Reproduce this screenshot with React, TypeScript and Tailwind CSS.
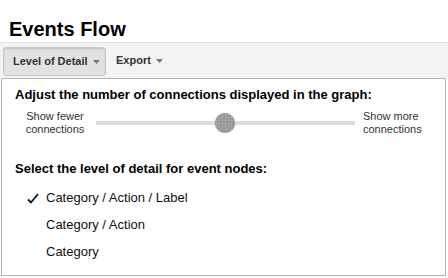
import React from "react";

function Caret() {
  return (
    <svg width="7" height="4" viewBox="0 0 7 4" className="ml-[5px] mt-[1px]">
      <path d="M0 0h7L3.5 4z" fill="#777" />
    </svg>
  );
}

function Check() {
  return (
    <svg width="12" height="11" viewBox="0 0 12 11" className="shrink-0">
      <path d="M1 6.5 4 9.5 11 1" fill="none" stroke="#111" strokeWidth="1.8" />
    </svg>
  );
}

const levels = ["Category / Action / Label", "Category / Action", "Category"];

export default function App() {
  return (
    <div
      className="w-[448px] h-[278px] bg-white overflow-hidden text-[#222]"
      style={{ fontFamily: '"Liberation Sans", Arial, sans-serif' }}
    >
      <h1 className="h-[42px] pl-[9px] pt-[17px] text-[20px] leading-[24px] font-bold text-black">
        Events Flow
      </h1>
      <div className="h-[36px] border-t border-[#e2e2e2] bg-[#f3f3f3] flex items-center pl-[3px] gap-[7px]">
        <button className="h-[29px] w-[103px] mt-[1px] flex items-center pl-[9px] rounded-[3px] border border-[#c8c8c8] bg-[#e2e2e2] shadow-[inset_0_1px_2px_rgba(0,0,0,0.15)] text-[11px] font-bold text-[#333]">
          Level of Detail
          <Caret />
        </button>
        <button className="h-[29px] flex items-center px-[3px] text-[11px] font-bold text-[#333]">
          Export
          <Caret />
        </button>
      </div>
      <div className="ml-[1px] w-[445px] h-[198px] border border-[#b5b5b5] bg-white">
        <div className="pl-[13px] pt-[8px] text-[13px] leading-[16px] font-bold text-black">
          Adjust the number of connections displayed in the graph:
        </div>
        <div className="flex items-center mt-[6px] h-[28px]">
          <div className="w-[90px] pl-[16px] text-center text-[11px] leading-[13px] text-[#333]">
            Show fewer
            <br />
            connections
          </div>
          <div className="relative ml-[4px] w-[259px] h-[4px] bg-[#dcdcdc]">
            <div className="absolute left-[119px] top-[-8px] w-[20px] h-[20px] rounded-full bg-[#999] shadow-[0_0_1px_rgba(0,0,0,0.4)] bg-[radial-gradient(#bbb_0.6px,transparent_0.8px)] bg-[length:3px_3px]" />
          </div>
          <div className="ml-[8px] text-[11px] leading-[13px] text-[#333]">
            Show more
            <br />
            connections
          </div>
        </div>
        <div className="pl-[13px] mt-[24px] text-[13px] leading-[16px] font-bold text-black">
          Select the level of detail for event nodes:
        </div>
        <ul className="mt-[13px] flex flex-col gap-[11px] text-[13px] leading-[16px] text-[#111]">
          {levels.map((l, i) => (
            <li key={l} className="flex items-center h-[16px]">
              <span className="w-[44px] pl-[25px] flex items-center">{i === 0 && <Check />}</span>
              {l}
            </li>
          ))}
        </ul>
      </div>
    </div>
  );
}
